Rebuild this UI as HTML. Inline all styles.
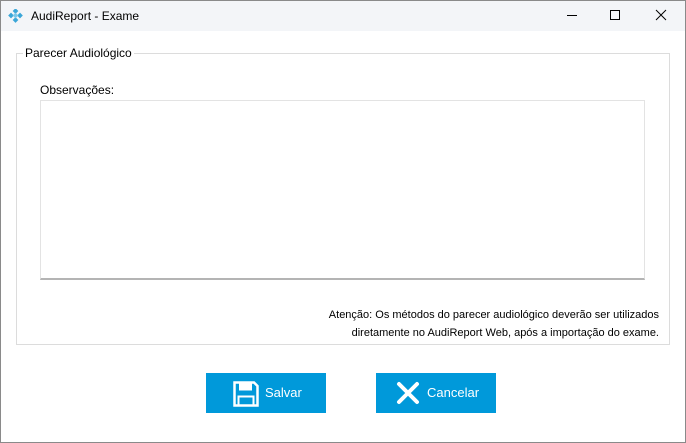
<!DOCTYPE html>
<html><head><meta charset="utf-8"><style>
*{margin:0;padding:0;box-sizing:border-box}
body{width:686px;height:443px;background:#fff;font-family:"Liberation Sans",Arial,sans-serif;position:relative;overflow:hidden}
.frame{position:absolute;left:0;top:0;width:686px;height:443px;border:1px solid #8a8a8a;pointer-events:none}
.tb{position:absolute;left:0;top:0;width:686px;height:31px;background:#f3f5f8}
.title{position:absolute;left:31px;top:9px;font-size:12px;color:#000}
.ctl{position:absolute;top:0;width:46px;height:31px}
.gb{position:absolute;left:16px;top:53px;width:654px;height:292px;border:1px solid #dcdcdc}
.gl{position:absolute;left:23px;top:46px;background:#fff;padding:0 2px;font-size:12px;color:#000}
.obs{position:absolute;left:40px;top:83px;font-size:12px}
.ta{position:absolute;left:40px;top:100px;width:605px;height:180px;border:1px solid #e3e3e3;border-bottom:2px solid #b4b4b4}
.note{position:absolute;right:27px;top:306px;font-size:11px;line-height:18px;text-align:right;color:#000}
.btn{position:absolute;top:373px;width:120px;height:40px;background:#0099da;color:#fff;font-size:13px}
.btn span{position:absolute;top:12px}
</style></head><body>
<div class="tb">
<svg style="position:absolute;left:8px;top:9px" width="16" height="14" viewBox="0 0 16 14">
<g fill="#3aa6d8"><rect x="5.5" y="0" width="4" height="4" transform="rotate(45 7.5 2)"/><rect x="1" y="4.5" width="4" height="4" transform="rotate(45 3 6.5)"/><rect x="10" y="4.5" width="4" height="4" transform="rotate(45 12 6.5)"/><rect x="5.5" y="9" width="4" height="4" transform="rotate(45 7.5 11)"/><rect x="5.5" y="4.5" width="4" height="4" fill="#7cc7e8" transform="rotate(45 7.5 6.5)"/></g></svg>
<div class="title">AudiReport - Exame</div>
<svg class="ctl" style="left:549px" viewBox="0 0 46 31"><line x1="18" y1="15.5" x2="28" y2="15.5" stroke="#000"/></svg>
<svg class="ctl" style="left:592px" viewBox="0 0 46 31"><rect x="18.5" y="10.5" width="9" height="9" fill="none" stroke="#000"/></svg>
<svg class="ctl" style="left:638px" viewBox="0 0 46 31"><path d="M18 10 L28 20 M28 10 L18 20" stroke="#000"/></svg>
</div>
<div class="gb"></div>
<div class="gl">Parecer Audiológico</div>
<div class="obs">Observações:</div>
<div class="ta"></div>
<div class="note">Atenção: Os métodos do parecer audiológico deverão ser utilizados<br>diretamente no AudiReport Web, após a importação do exame.</div>
<div class="btn" style="left:206px">
<svg style="position:absolute;left:27px;top:8px" width="26" height="26" viewBox="0 0 26 26"><path d="M1.5 1.5 H21 L24.5 5 V24.5 H1.5 Z" fill="none" stroke="#fff" stroke-width="2.5"/><rect x="6" y="1.5" width="13" height="8" fill="#fff"/><path d="M5.5 24.5 V15.5 H20.5 V24.5" fill="none" stroke="#fff" stroke-width="2"/></svg>
<span style="left:59px">Salvar</span></div>
<div class="btn" style="left:376px">
<svg style="position:absolute;left:20px;top:8px" width="24" height="24" viewBox="0 0 24 24"><path d="M3 3 L21 21 M21 3 L3 21" stroke="#fff" stroke-width="4" stroke-linecap="round"/></svg>
<span style="left:51px">Cancelar</span></div>
<div class="frame"></div>
</body></html>
